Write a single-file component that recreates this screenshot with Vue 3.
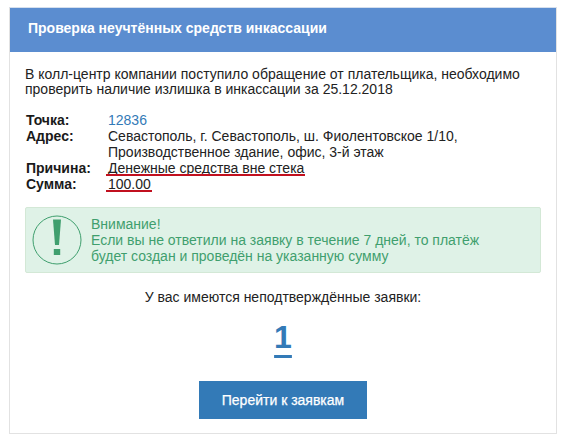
<template>
  <div class="page">
    <section class="card">
      <header class="head">Проверка неучтённых средств инкассации</header>
      <div class="body">
        <p class="intro">В колл-центр компании поступило обращение от плательщика, необходимо<br>проверить наличие излишка в инкассации за 25.12.2018</p>
        <dl class="facts">
          <dt>Точка:</dt>
          <dd class="link">12836</dd>
          <dt>Адрес:</dt>
          <dd>Севастополь, г. Севастополь, ш. Фиолентовское 1/10,<br>Производственное здание, офис, 3-й этаж</dd>
          <dt>Причина:</dt>
          <dd><span class="marked">Денежные средства вне стека</span></dd>
          <dt>Сумма:</dt>
          <dd><span class="marked">100.00</span></dd>
        </dl>
        <div class="alert">
          <svg class="icon" width="50" height="50" viewBox="0 0 50 50">
            <circle cx="25" cy="25" r="24" fill="none" stroke="#3f9f6e" stroke-width="1"/>
            <path d="M21 4.5h8L27 30h-4z" fill="#3f9f6e"/>
            <rect x="21.8" y="34" width="6.4" height="6" fill="#3f9f6e"/>
          </svg>
          <div class="alert-text">Внимание!<br>Если вы не ответили на заявку в течение 7 дней, то платёж<br>будет создан и проведён на указанную сумму</div>
        </div>
        <p class="pending">У вас имеются неподтверждённые заявки:</p>
        <a class="count">1</a>
        <button class="go" type="button">Перейти к заявкам</button>
      </div>
    </section>
  </div>
</template>

<script setup>
</script>

<style>
html, body { margin: 0; background: #fff; }
</style>

<style scoped>
.page {
  width: 566px;
  height: 439px;
  box-sizing: border-box;
  padding: 7px 9px 0;
  font-family: "Liberation Sans", Arial, sans-serif;
  font-size: 14px;
  color: #222;
}
.card {
  width: 548px;
  height: 427px;
  box-sizing: border-box;
  border: 1px solid #e2e2e2;
  border-top-color: #d5dfed;
  display: flex;
  flex-direction: column;
}
.head {
  height: 44px;
  flex: none;
  background: #5b8dd0;
  color: #fff;
  font-weight: 700;
  font-size: 14px;
  line-height: 41px;
  padding-left: 18px;
}
.body {
  padding: 15px 15px 0;
  display: flex;
  flex-direction: column;
}
.intro {
  margin: 0 0 15px;
  line-height: 15px;
}
.facts {
  margin: 0 0 15px;
  display: grid;
  grid-template-columns: 83px 1fr;
  line-height: 16px;
}
.facts dt {
  font-weight: 700;
  padding-left: 1px;
  color: #1a1a1a;
}
.facts dd { margin: 0; }
.link { color: #337ab7; }
.marked {
  position: relative;
  display: inline-block;
}
.marked::after {
  content: "";
  position: absolute;
  left: -2px;
  right: -1px;
  bottom: 0;
  height: 2px;
  background: #c1101f;
}
.alert {
  height: 66px;
  box-sizing: border-box;
  background: #dff2e7;
  border: 1px solid #d3e8d6;
  border-radius: 2px;
  color: #3f9f6e;
  display: flex;
  align-items: center;
  gap: 9px;
  padding-left: 6px;
}
.icon { flex: none; }
.alert-text { line-height: 16px; }
.pending {
  margin: 16px 0 0;
  text-align: center;
  line-height: 16px;
}
.count {
  margin-top: 11px;
  align-self: center;
  color: #337ab7;
  font-size: 32px;
  font-weight: 700;
  line-height: 42px;
  text-decoration: underline;
  text-decoration-thickness: 3px;
  text-underline-offset: 7px;
}
.go {
  margin-top: 23px;
  align-self: center;
  width: 168px;
  height: 38px;
  border: 0;
  background: #337ab7;
  color: #fff;
  font: 400 14px "Liberation Sans", Arial, sans-serif;
  -webkit-text-stroke: 0.25px #fff;
  padding: 0;
}
</style>
